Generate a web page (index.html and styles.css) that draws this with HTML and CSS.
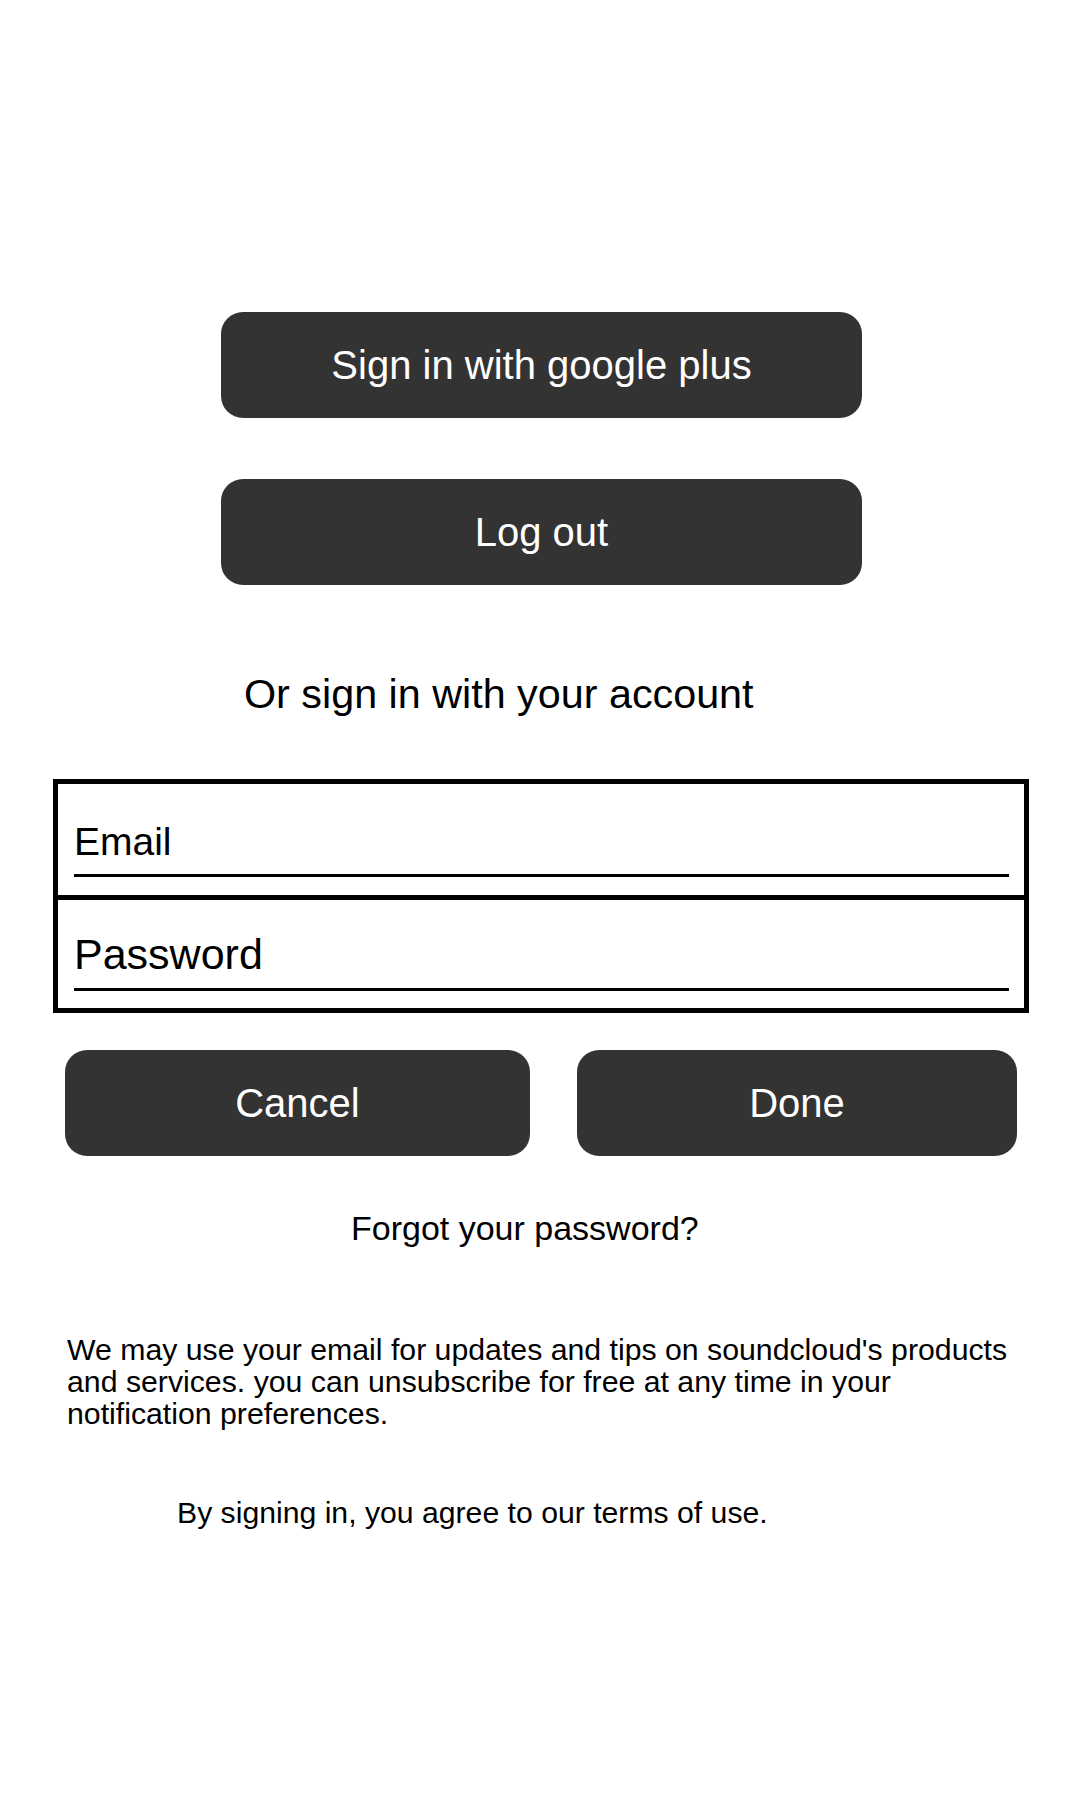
FILE: index.html
```html
<!DOCTYPE html>
<html lang="en">
<head>
<meta charset="utf-8">
<title>Sign in</title>
<link rel="stylesheet" href="styles.css">
</head>
<body>
<div class="page">
  <div class="btn btn-top">Sign in with google plus</div>
  <div class="btn btn-top btn-second">Log out</div>
  <div class="or-text">Or sign in with your account</div>
  <div class="form-box">
    <div class="form-row row-email">
      <div class="field field-email">Email</div>
    </div>
    <div class="form-row row-password">
      <div class="field field-password">Password</div>
    </div>
  </div>
  <div class="action-row">
    <div class="btn btn-cancel">Cancel</div>
    <div class="btn btn-done">Done</div>
  </div>
  <div class="forgot">Forgot your password?</div>
  <p class="notice">We may use your email for updates and tips on soundcloud's products and services. you can unsubscribe for free at any time in your notification preferences.</p>
  <div class="terms">By signing in, you agree to our terms of use.</div>
</div>
</body>
</html>
```
FILE: styles.css
```css
html, body {
  margin: 0;
  padding: 0;
  background: #ffffff;
}

body {
  font-family: "Liberation Sans", Arial, sans-serif;
  color: #000000;
  width: 1080px;
  height: 1800px;
}

.page {
  display: flex;
  flex-direction: column;
  align-items: flex-start;
  padding-top: 312px;
}

.btn {
  background: #333333;
  color: #ffffff;
  border-radius: 22px;
  display: flex;
  align-items: center;
  justify-content: center;
  height: 106px;
  font-size: 40px;
}

.btn-top {
  margin-left: 221px;
  width: 641px;
}

.btn-second {
  margin-top: 61px;
}

.or-text {
  margin-top: 85px;
  margin-left: 244px;
  font-size: 41.3px;
  line-height: 48px;
}

.form-box {
  margin-top: 61px;
  margin-left: 53px;
  width: 976px;
  box-sizing: border-box;
  border: 5px solid #000000;
  display: flex;
  flex-direction: column;
}

.form-row {
  padding: 0 15px 0 16px;
}

.row-email {
  padding-top: 36px;
  padding-bottom: 18px;
  border-bottom: 5px solid #000000;
}

.row-password {
  padding-top: 30px;
  padding-bottom: 17px;
}

.field {
  border-bottom: 3px solid #000000;
}

.field-email {
  font-size: 39px;
  line-height: 44px;
  padding-bottom: 10px;
}

.field-password {
  font-size: 43px;
  line-height: 48px;
  padding-bottom: 10px;
}

.action-row {
  margin-top: 37px;
  margin-left: 65px;
  display: flex;
  gap: 47px;
}

.btn-cancel {
  width: 465px;
}

.btn-done {
  width: 440px;
}

.forgot {
  margin-top: 52px;
  margin-left: 351px;
  font-size: 34px;
  line-height: 40px;
}

.notice {
  margin: 86px 0 0 67px;
  width: 960px;
  font-size: 30.25px;
  line-height: 32px;
}

.terms {
  margin-top: 66px;
  margin-left: 177px;
  font-size: 30.2px;
  line-height: 34px;
}
```
